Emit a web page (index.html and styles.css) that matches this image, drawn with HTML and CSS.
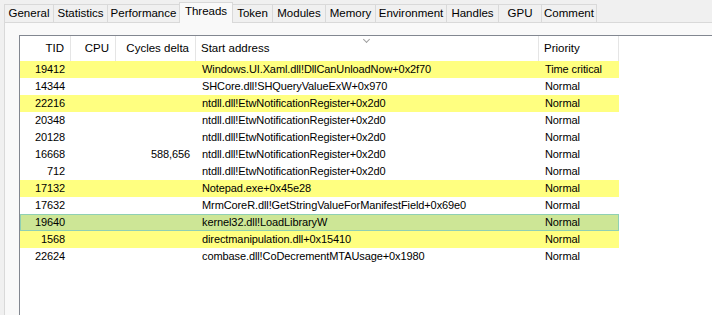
FILE: index.html
```html
<!DOCTYPE html>
<html lang="en">
<head>
  <meta charset="UTF-8" />
  <title>Threads</title>
  <link rel="stylesheet" href="styles.css">
</head>
<body>
  <div class="tabs">
    <div class="tab" style="width: 50px">General</div>
    <div class="tab" style="width: 55px">Statistics</div>
    <div class="tab" style="width: 73px">Performance</div>
    <div class="tab active" style="width: 54px">Threads</div>
    <div class="tab" style="width: 41px">Token</div>
    <div class="tab" style="width: 54px">Modules</div>
    <div class="tab" style="width: 51px">Memory</div>
    <div class="tab" style="width: 72px">Environment</div>
    <div class="tab" style="width: 53px">Handles</div>
    <div class="tab" style="width: 44px">GPU</div>
    <div class="tab" style="width: 56px">Comment</div>
  </div>

  <div class="panel">
    <div class="list">
      <div class="header">
        <div class="col num">TID</div>
        <div class="col num">CPU</div>
        <div class="col num">Cycles delta</div>
        <div class="col sorted">Start address<span class="chevron"></span></div>
        <div class="col">Priority</div>
      </div>

      <div class="row gui">
        <div class="cell num">19412</div><div class="cell"></div><div class="cell"></div>
        <div class="cell">Windows.UI.Xaml.dll!DllCanUnloadNow+0x2f70</div><div class="cell">Time critical</div>
      </div>
      <div class="row">
        <div class="cell num">14344</div><div class="cell"></div><div class="cell"></div>
        <div class="cell">SHCore.dll!SHQueryValueExW+0x970</div><div class="cell">Normal</div>
      </div>
      <div class="row gui">
        <div class="cell num">22216</div><div class="cell"></div><div class="cell"></div>
        <div class="cell">ntdll.dll!EtwNotificationRegister+0x2d0</div><div class="cell">Normal</div>
      </div>
      <div class="row">
        <div class="cell num">20348</div><div class="cell"></div><div class="cell"></div>
        <div class="cell">ntdll.dll!EtwNotificationRegister+0x2d0</div><div class="cell">Normal</div>
      </div>
      <div class="row">
        <div class="cell num">20128</div><div class="cell"></div><div class="cell"></div>
        <div class="cell">ntdll.dll!EtwNotificationRegister+0x2d0</div><div class="cell">Normal</div>
      </div>
      <div class="row">
        <div class="cell num">16668</div><div class="cell"></div><div class="cell num">588,656</div>
        <div class="cell">ntdll.dll!EtwNotificationRegister+0x2d0</div><div class="cell">Normal</div>
      </div>
      <div class="row">
        <div class="cell num">712</div><div class="cell"></div><div class="cell"></div>
        <div class="cell">ntdll.dll!EtwNotificationRegister+0x2d0</div><div class="cell">Normal</div>
      </div>
      <div class="row gui">
        <div class="cell num">17132</div><div class="cell"></div><div class="cell"></div>
        <div class="cell">Notepad.exe+0x45e28</div><div class="cell">Normal</div>
      </div>
      <div class="row">
        <div class="cell num">17632</div><div class="cell"></div><div class="cell"></div>
        <div class="cell">MrmCoreR.dll!GetStringValueForManifestField+0x69e0</div><div class="cell">Normal</div>
      </div>
      <div class="row new">
        <div class="cell num">19640</div><div class="cell"></div><div class="cell"></div>
        <div class="cell">kernel32.dll!LoadLibraryW</div><div class="cell">Normal</div>
      </div>
      <div class="row gui">
        <div class="cell num">1568</div><div class="cell"></div><div class="cell"></div>
        <div class="cell">directmanipulation.dll+0x15410</div><div class="cell">Normal</div>
      </div>
      <div class="row">
        <div class="cell num">22624</div><div class="cell"></div><div class="cell"></div>
        <div class="cell">combase.dll!CoDecrementMTAUsage+0x1980</div><div class="cell">Normal</div>
      </div>
    </div>
  </div>
</body>
</html>
```

FILE: styles.css
```css
html, body {
  height: 100%;
}
body {
  margin: 0;
  background-color: #f0f0f0;
  font-family: 'Liberation Sans', Arial, sans-serif;
  font-size: 11px;
  color: #000;
  display: flex;
  flex-direction: column;
  overflow: hidden;
}
.tabs {
  display: flex;
  align-items: flex-end;
  height: 22px;
  padding-left: 4px;
  position: relative;
  z-index: 1;
}
.tab {
  flex: none;
  box-sizing: border-box;
  height: 18px;
  border: 1px solid #d9d9d9;
  border-bottom: none;
  margin-right: -1px;
  background-color: #f0f0f0;
  font-size: 11.5px;
  line-height: 17px;
  text-align: center;
  color: #000;
}
.tab.active {
  height: 21px;
  margin-bottom: -1px;
  background-color: #f9f9f9;
  line-height: 16px;
  position: relative;
  z-index: 2;
}
.panel {
  flex: 1;
  margin-left: 4px;
  border-top: 1px solid #d9d9d9;
  border-left: 1px solid #d9d9d9;
  background-color: #f9f9f9;
  padding: 12px 0 0 14px;
  display: flex;
}
.list {
  flex: 1;
  background-color: #fff;
  border-top: 1px solid #828790;
  border-left: 1px solid #828790;
}
.header,
.row {
  display: grid;
  grid-template-columns: 51px 45px 80px 343px 80px;
  width: 599px;
}
.header {
  height: 25px;
}
.col {
  box-sizing: border-box;
  border-right: 1px solid #e5e5e5;
  font-size: 11.5px;
  line-height: 24px;
  padding: 0 6px 0 5px;
  position: relative;
}
.num {
  text-align: right;
}
.chevron {
  position: absolute;
  left: 168px;
  top: 1px;
  width: 4px;
  height: 4px;
  border-right: 1px solid #a0a0a0;
  border-bottom: 1px solid #a0a0a0;
  transform: rotate(45deg);
}
.row {
  height: 17px;
}
.cell {
  line-height: 17px;
  padding: 0 6px 0 6px;
  white-space: nowrap;
  letter-spacing: -0.1px;
}
.row.gui {
  background-color: #ffff80;
}
.row.new {
  background-color: #cde696;
  box-shadow: inset 0 0 0 1px #8fd0b4;
}
```
